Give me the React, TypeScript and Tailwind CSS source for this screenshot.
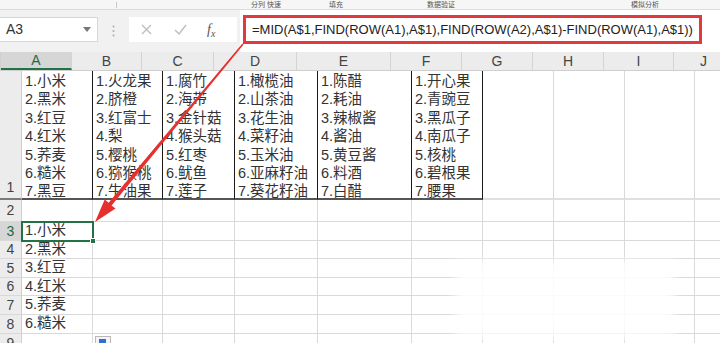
import React from "react";

const cols = [
  { l: "A", w: "w-[71px]" },
  { l: "B", w: "w-[70px]" },
  { l: "C", w: "w-[72px]" },
  { l: "D", w: "w-[83px]" },
  { l: "E", w: "w-[94px]" },
  { l: "F", w: "w-[71px]" },
  { l: "G", w: "w-[71px]" },
  { l: "H", w: "w-[71px]" },
  { l: "I", w: "w-[70px]" },
  { l: "J", w: "w-[60px]" },
];

const row1: string[][] = [
  ["1.小米", "2.黑米", "3.红豆", "4.红米", "5.荞麦", "6.糙米", "7.黑豆"],
  ["1.火龙果", "2.脐橙", "3.红富士", "4.梨", "5.樱桃", "6.猕猴桃", "7.牛油果"],
  ["1.腐竹", "2.海带", "3.金针菇", "4.猴头菇", "5.红枣", "6.鱿鱼", "7.莲子"],
  ["1.橄榄油", "2.山茶油", "3.花生油", "4.菜籽油", "5.玉米油", "6.亚麻籽油", "7.葵花籽油"],
  ["1.陈醋", "2.耗油", "3.辣椒酱", "4.酱油", "5.黄豆酱", "6.料酒", "7.白醋"],
  ["1.开心果", "2.青豌豆", "3.黑瓜子", "4.南瓜子", "5.核桃", "6.碧根果", "7.腰果"],
];

const lowerRows = [
  { n: "2", h: "h-[22px]", v: "" },
  { n: "3", h: "h-[19px]", v: "1.小米" },
  { n: "4", h: "h-[18px]", v: "2.黑米" },
  { n: "5", h: "h-[19px]", v: "3.红豆" },
  { n: "6", h: "h-[18px]", v: "4.红米" },
  { n: "7", h: "h-[19px]", v: "5.荞麦" },
  { n: "8", h: "h-[19px]", v: "6.糙米" },
  { n: "9", h: "h-[19px]", v: "" },
];

const cellFont = { fontFamily: '"Liberation Sans", "Noto Sans CJK SC", sans-serif' };

export default function App() {
  return (
    <div
      className="relative w-[720px] h-[343px] overflow-hidden bg-white text-[#333]"
      style={cellFont}
    >
      {/* ribbon remnant */}
      <div className="h-[10px] bg-[#f6f6f6] border-b border-[#dcdcdc] flex items-center text-[7px] text-[#555] leading-none">
        <span className="ml-[116px] w-px h-[6px] bg-[#c8c8c8]" />
        <span className="ml-[134px]">分列 快速</span>
        <span className="ml-[48px]">填充</span>
        <span className="ml-[84px]">数据验证</span>
        <span className="ml-[176px]">模拟分析</span>
      </div>

      {/* formula bar */}
      <div className="h-[42px] bg-[#f1f1f1] flex items-start">
        <div className="mt-[7px] w-[98px] h-[25px] bg-white border-r border-y border-[#d6d6d6] flex items-center justify-between pl-[6px] pr-[6px]">
          <span className="text-[14px] text-[#333]">A3</span>
          <svg width="8" height="5" viewBox="0 0 8 5">
            <path d="M0 0 L8 0 L4 5 Z" fill="#777" />
          </svg>
        </div>
        <div className="w-[31px] h-[42px] flex items-center justify-center">
          <svg width="3" height="12" viewBox="0 0 3 12">
            <circle cx="1.5" cy="1.5" r="1" fill="#aaa" />
            <circle cx="1.5" cy="6" r="1" fill="#aaa" />
            <circle cx="1.5" cy="10.5" r="1" fill="#aaa" />
          </svg>
        </div>
        <div className="mt-[7px] w-[108px] h-[25px] bg-white flex items-center">
          <svg className="ml-[12px]" width="11" height="11" viewBox="0 0 11 11">
            <path d="M1 1 L10 10 M10 1 L1 10" stroke="#bdbdbd" strokeWidth="1.4" />
          </svg>
          <svg className="ml-[22px]" width="13" height="11" viewBox="0 0 13 11">
            <path d="M1 6 L5 10 L12 1" stroke="#bdbdbd" strokeWidth="1.4" fill="none" />
          </svg>
          <span
            className="ml-[20px] text-[14px] italic text-[#555]"
            style={{ fontFamily: '"Liberation Serif", serif' }}
          >
            f<sub className="text-[10px]">x</sub>
          </span>
        </div>
        <div className="ml-[3px] flex-1 h-[42px] bg-white pt-[5px] pl-[3px]">
          <div className="w-[459px] h-[29px] border-[3px] border-[#e0393e] flex items-center pl-[6px]">
            <span className="text-[13px] text-[#222] whitespace-nowrap">
              =MID(A$1,FIND(ROW(A1),A$1),FIND(ROW(A2),A$1)-FIND(ROW(A1),A$1))
            </span>
          </div>
        </div>
      </div>

      {/* column headers */}
      <div className="flex h-[19px] bg-[#ececec] border-b border-[#cfcfcf]">
        <div className="w-[22px] h-full border-r border-[#cfcfcf] relative">
          <svg className="absolute right-[3px] bottom-[3px]" width="10" height="10" viewBox="0 0 10 10">
            <path d="M10 0 L10 10 L0 10 Z" fill="#c4c4c4" />
          </svg>
        </div>
        {cols.map((c) => (
          <div
            key={c.l}
            className={`${c.w} shrink-0 h-full flex items-center justify-center border-r border-[#d4d4d4] text-[14px] ${
              c.l === "A" ? "bg-[#d6d6d6] text-[#1f6b41] border-b-2 border-b-[#217346]" : "text-[#444]"
            }`}
          >
            {c.l}
          </div>
        ))}
      </div>

      {/* row 1 */}
      <div className="flex h-[129px]">
        <div className="w-[22px] shrink-0 bg-[#ececec] border-r border-[#cfcfcf] border-b-2 border-b-[#7a7a7a] flex items-end justify-center text-[14px] text-[#444]">
          1
        </div>
        {cols.map((c, i) => {
          const data = row1[i];
          if (data) {
            return (
              <div
                key={c.l}
                className={`${c.w} shrink-0 h-full border-r border-[#1a1a1a] border-b-2 border-b-[#555] pl-[3px] pt-[1px] text-[14.5px] leading-[18.4px] text-[#333] whitespace-nowrap overflow-hidden`}
              >
                {data.map((t) => (
                  <div key={t}>{t}</div>
                ))}
              </div>
            );
          }
          return (
            <div
              key={c.l}
              className={`${c.w} shrink-0 h-full border-r border-[#d9d9d9] border-b-2 border-b-[#e0e0e0]`}
            />
          );
        })}
      </div>

      {/* lower rows */}
      {lowerRows.map((r) => (
        <div key={r.n} className={`flex ${r.h}`}>
          <div
            className={`w-[22px] shrink-0 border-r border-[#cfcfcf] border-b border-b-[#d9d9d9] flex items-center justify-center text-[14px] ${
              r.n === "3" ? "bg-[#d6d6d6] text-[#1f6b41]" : "bg-[#ececec] text-[#444]"
            }`}
          >
            {r.n}
          </div>
          {cols.map((c, i) => (
            <div
              key={c.l}
              className={`${c.w} shrink-0 h-full border-r border-b border-[#d9d9d9] pl-[3px] flex items-center text-[14.5px] text-[#333] whitespace-nowrap`}
            >
              {i === 0 ? r.v : ""}
            </div>
          ))}
        </div>
      ))}

      {/* selected cell A3 */}
      <div className="absolute left-[21px] top-[221px] w-[73px] h-[21px] border-2 border-[#217346] pointer-events-none" />
      <div className="absolute left-[90px] top-[238px] w-[6px] h-[6px] bg-[#217346] border border-white pointer-events-none" />

      {/* paste options icon */}
      <div className="absolute left-[95px] top-[336px] w-[16px] h-[14px] bg-[#f4f4f4] border border-[#b9b9b9] pointer-events-none">
        <div className="ml-[3px] mt-[2px] w-[7px] h-[6px] bg-[#2e6fd8]" />
      </div>

      {/* watermark erase patch */}
      <div className="absolute left-[455px] top-[260px] w-[220px] h-[78px] bg-white/85 blur-[5px] pointer-events-none" />

      {/* red arrow */}
      <svg className="absolute left-0 top-0 pointer-events-none" width="720" height="343" viewBox="0 0 720 343">
        <polygon
          points="243.6,44.5 111.6,205.4 115.5,208.6 95,222 104.7,199.6 108.6,202.8 242.4,43.5"
          fill="#e5302e"
        />
      </svg>
    </div>
  );
}
